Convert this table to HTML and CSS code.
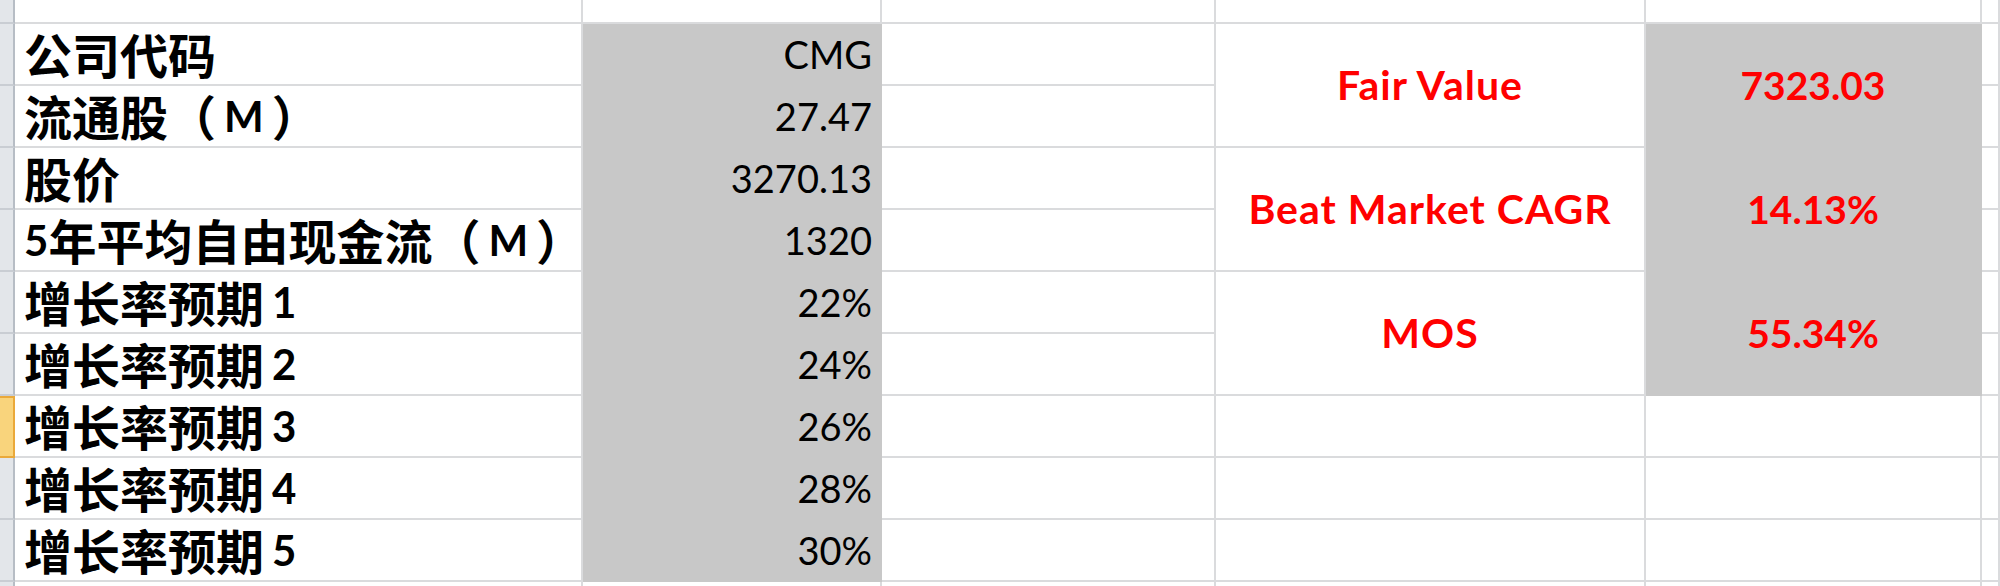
FILE: index.html
```html
<!DOCTYPE html>
<html lang="zh">
<head>
<meta charset="utf-8">
<title>CMG</title>
<link rel="stylesheet" href="styles.css">
</head>
<body>
<div class="sheet">
  <div class="c rh"></div><div class="c"></div><div class="c"></div><div class="c"></div><div class="c"></div><div class="c"></div><div class="c"></div>

  <div class="c rh"></div>
  <div class="c lbl">公司代码</div>
  <div class="c g val">CMG</div>
  <div class="c"></div>
  <div class="c red rl span2">Fair Value</div>
  <div class="c g red span2">7323.03</div>
  <div class="c"></div>

  <div class="c rh"></div>
  <div class="c lbl">流通股（<span class="lat m">M</span>）</div>
  <div class="c g val">27.47</div>
  <div class="c"></div>
  <div class="c"></div>

  <div class="c rh"></div>
  <div class="c lbl">股价</div>
  <div class="c g val">3270.13</div>
  <div class="c"></div>
  <div class="c red rl span2">Beat Market CAGR</div>
  <div class="c g red span2">14.13%</div>
  <div class="c"></div>

  <div class="c rh"></div>
  <div class="c lbl"><span class="lat">5</span>年平均自由现金流（<span class="lat m">M</span>）</div>
  <div class="c g val">1320</div>
  <div class="c"></div>
  <div class="c"></div>

  <div class="c rh"></div>
  <div class="c lbl">增长率预期<span class="lat num">1</span></div>
  <div class="c g val">22%</div>
  <div class="c"></div>
  <div class="c red rl span2">MOS</div>
  <div class="c g red span2">55.34%</div>
  <div class="c"></div>

  <div class="c rh"></div>
  <div class="c lbl">增长率预期<span class="lat num">2</span></div>
  <div class="c g val">24%</div>
  <div class="c"></div>
  <div class="c"></div>

  <div class="c rh sel"></div>
  <div class="c lbl">增长率预期<span class="lat num">3</span></div>
  <div class="c g val">26%</div>
  <div class="c"></div><div class="c"></div><div class="c"></div><div class="c"></div>

  <div class="c rh"></div>
  <div class="c lbl">增长率预期<span class="lat num">4</span></div>
  <div class="c g val">28%</div>
  <div class="c"></div><div class="c"></div><div class="c"></div><div class="c"></div>

  <div class="c rh"></div>
  <div class="c lbl">增长率预期<span class="lat num">5</span></div>
  <div class="c g val">30%</div>
  <div class="c"></div><div class="c"></div><div class="c"></div><div class="c"></div>

  <div class="c rh tail"></div><div class="c tail"></div><div class="c tail"></div><div class="c tail"></div><div class="c tail"></div><div class="c tail"></div><div class="c tail"></div>
</div>
</body>
</html>
```

FILE: styles.css
```css
html, body {
  margin: 0;
  padding: 0;
  background: #ffffff;
}

body {
  width: 2000px;
  height: 586px;
  overflow: hidden;
}

.sheet {
  display: grid;
  grid-template-columns: 15px 568px 299px 334px 430px 336px 18px;
  grid-template-rows: 24px repeat(9, 62px) 4px;
  width: 2000px;
}

.c {
  box-sizing: border-box;
  border-right: 2px solid #dadbdd;
  border-bottom: 2px solid #dadbdd;
  display: flex;
  white-space: nowrap;
  color: #000000;
}

.tail {
  border-bottom: none;
}

.rh {
  background: #e3e6ea;
  border-right-color: #b7bdc5;
  border-bottom-color: #c9cdd3;
}

.rh.sel {
  background: #f9d47c;
  border-right-color: #eaa93a;
  border-bottom-color: #eaa93a;
  box-shadow: inset 0 2px 0 #eaa93a;
}

.g {
  background: #c8c8c8;
  border-color: transparent;
}

.span2 {
  grid-row: span 2;
}

.lbl {
  font-family: "Noto Sans CJK SC", "Noto Sans CJK JP", sans-serif;
  font-weight: 700;
  font-size: 48px;
  line-height: 1.15;
  align-items: center;
  padding-left: 9px;
}

.lat {
  font-family: Lato, "Liberation Sans", sans-serif;
  font-size: 42px;
  font-weight: 700;
}

.m {
  margin: 0 8px;
}

.num {
  margin-left: 8px;
}

.val {
  font-family: Lato, "Liberation Sans", sans-serif;
  font-weight: 400;
  font-size: 38px;
  line-height: 1.1;
  justify-content: flex-end;
  align-items: flex-end;
  padding: 0 8px 8px 0;
}

.red {
  color: #ff0000;
  font-family: Lato, "Liberation Sans", sans-serif;
  font-weight: 700;
  font-size: 39px;
  line-height: 1.1;
  justify-content: center;
  align-items: center;
}

.rl {
  font-size: 41px;
  letter-spacing: 1px;
}
```
